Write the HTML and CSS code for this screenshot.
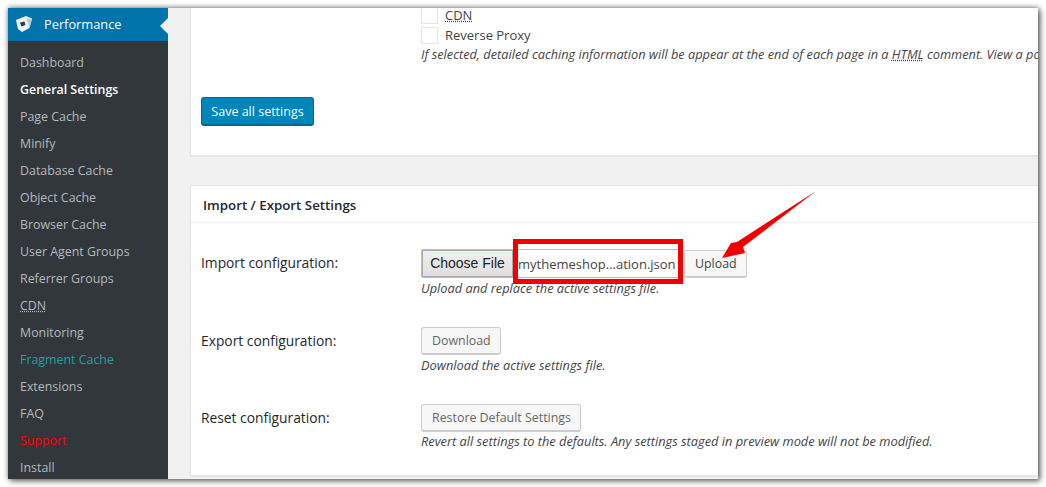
FILE: index.html
```html
<!DOCTYPE html>
<html lang="en">
<head>
    <meta charset="UTF-8">
    <title>Performance - General Settings</title>
    <link rel="stylesheet" href="styles.css">
</head>
<body>
    <div class="screen">
        <div class="sidebar">
            <div class="menu-head">
                <svg class="menu-icon" width="18" height="18" viewBox="0 0 18 18">
                    <path d="M1 5 L11 1 L17 3.5 L14.5 13 L7 17 L3 14 Z" fill="#f4f7f9"/>
                    <path d="M11 4 L17 3.5 L14.5 13 L13 8 Z" fill="#b9cdd8"/>
                    <path d="M5 7.5 L9.5 6.5 L10.5 10 L6.5 11.5 Z" fill="#32373c"/>
                </svg>
                <span>Performance</span>
            </div>
            <ul class="menu">
                <li>Dashboard</li>
                <li class="current">General Settings</li>
                <li>Page Cache</li>
                <li>Minify</li>
                <li>Database Cache</li>
                <li>Object Cache</li>
                <li>Browser Cache</li>
                <li>User Agent Groups</li>
                <li>Referrer Groups</li>
                <li><abbr>CDN</abbr></li>
                <li>Monitoring</li>
                <li class="teal">Fragment Cache</li>
                <li>Extensions</li>
                <li>FAQ</li>
                <li class="red">Support</li>
                <li>Install</li>
            </ul>
        </div>
        <div class="content">
            <div class="card card-top">
                <div class="check-row"><span class="check"></span><abbr>CDN</abbr></div>
                <div class="check-row"><span class="check"></span>Reverse Proxy</div>
                <p class="desc desc-long">If selected, detailed caching information will be appear at the end of each page in a <abbr>HTML</abbr> comment. View a possible list of the caching information here.</p>
                <button class="btn-primary">Save all settings</button>
            </div>
            <div class="card card-bottom">
                <h3 class="card-title">Import / Export Settings</h3>
                <div class="row row-import">
                    <div class="label">Import configuration:</div>
                    <div class="field">
                        <div class="file-line">
                            <div class="file-input">
                                <span class="choose">Choose File</span>
                                <span class="file-name">mythemeshop...ation.json</span>
                            </div>
                            <button class="btn">Upload</button>
                        </div>
                        <p class="desc">Upload and replace the active settings file.</p>
                    </div>
                </div>
                <div class="row row-export">
                    <div class="label">Export configuration:</div>
                    <div class="field">
                        <button class="btn btn-off">Download</button>
                        <p class="desc">Download the active settings file.</p>
                    </div>
                </div>
                <div class="row row-reset">
                    <div class="label">Reset configuration:</div>
                    <div class="field">
                        <button class="btn btn-off">Restore Default Settings</button>
                        <p class="desc desc-tight">Revert all settings to the defaults. Any settings staged in preview mode will not be modified.</p>
                    </div>
                </div>
            </div>
        </div>
        <!-- annotation drawn over the screenshot -->
        <div class="red-box"></div>
        <svg class="red-arrow" width="115" height="85" viewBox="0 0 115 85">
            <path d="M106 6 L27 57 L21 58 L12 73 L35 68 L33 62 Z" fill="#f00000"/>
        </svg>
    </div>
</body>
</html>
```
FILE: styles.css
```css
html, body {
	margin: 0;
	background-color: white;
}

body {
	padding: 8px;
	width: 1030px;
	height: 471px;
	overflow: hidden;
}

.screen {
	position: relative;
	display: flex;
	width: 1030px;
	height: 471px;
	overflow: hidden;
	background-color: #f1f1f1;
	font-family: "Open Sans", "Noto Sans", sans-serif;
	font-size: 13px;
	color: #444;
	box-shadow: 2px 2px 6px rgba(0, 0, 0, 0.6), 0 -1px 5px rgba(0, 0, 0, 0.35);
}

/* left menu */
.sidebar {
	width: 160px;
	flex-shrink: 0;
	background-color: #32373c;
}

.menu-head {
	display: flex;
	align-items: center;
	height: 32px;
	padding-bottom: 1px;
	background-color: #0073aa;
	color: white;
	font-size: 12.8px;
	position: relative;
}

.menu-head:after {
	content: "";
	position: absolute;
	right: 0;
	top: 10px;
	border: 8px solid transparent;
	border-right-color: #f1f1f1;
	border-left-width: 0;
}

.menu-icon {
	margin: 0 11px 0 7px;
}

.menu {
	list-style-type: none;
	margin: 0;
	padding: 8px 0 0 12px;
}

.menu li {
	height: 27px;
	line-height: 27px;
	color: #b4b9be;
	white-space: nowrap;
	font-size: 12.4px;
}

.menu .current {
	color: white;
	font-weight: 600;
}

.menu .teal {
	color: #1ca3a3;
}

.menu .red {
	color: #f00;
}

abbr {
	text-decoration: underline dotted;
}

/* main area */
.content {
	flex: 1;
	min-width: 0;
	padding-left: 22px;
}

.card {
	width: 900px;
	background-color: white;
	border: 1px solid #e5e5e5;
	box-shadow: 0 1px 1px rgba(0, 0, 0, 0.04);
}

.card-top {
	height: 151px;
	margin-top: -3px;
	border-top: 0;
	padding: 0 10px;
	box-sizing: border-box;
	margin-bottom: 29px;
}

.check-row {
	display: flex;
	align-items: center;
	height: 20px;
	margin-left: 220px;
}

.check {
	width: 15px;
	height: 15px;
	margin-right: 7px;
	border: 1px solid #e6e6e6;
}

.desc {
	margin: 1px 0 0 0;
	font-style: italic;
	font-size: 12.8px;
	line-height: 18px;
	white-space: nowrap;
}

.desc-long {
	margin: 0 0 0 220px;
	font-size: 12.75px;
}

.desc-tight {
	margin-top: 0;
}

.btn-primary {
	display: block;
	margin-top: 34px;
	width: 113px;
	height: 29px;
	padding: 0;
	background-color: #0085ba;
	border: 1px solid #006799;
	border-bottom-width: 2px;
	border-radius: 3px;
	color: white;
	font: inherit;
	font-size: 12.5px;
}

.card-bottom {
	height: 291px;
	box-sizing: border-box;
}

.card-title {
	margin: 0;
	height: 36px;
	line-height: 39px;
	padding-left: 12px;
	font-size: 13.3px;
	font-weight: 600;
	color: #23282d;
	border-bottom: 1px solid #eee;
}

.row {
	display: flex;
	padding-left: 10px;
}

.row-import {
	padding-top: 26px;
}

.row-export {
	padding-top: 30px;
}

.row-reset {
	padding-top: 30px;
}

.label {
	width: 220px;
	flex-shrink: 0;
	line-height: 28px;
	font-size: 13.8px;
	font-weight: 500;
	color: #23282d;
}

.field {
	min-width: 0;
}

.file-line {
	display: flex;
	align-items: flex-end;
	height: 29px;
}

.file-input {
	display: flex;
	align-items: center;
	align-self: flex-start;
	width: 256px;
	height: 27px;
	border: 1px solid #9ec2ef;
	border-radius: 2px;
	margin-right: 5px;
}

.choose {
	width: 91px;
	height: 27px;
	line-height: 25px;
	box-sizing: border-box;
	text-align: center;
	flex-shrink: 0;
	background: linear-gradient(#f0f0f0, #dedede);
	border: 1px solid #aaa;
	font-family: "Liberation Sans", sans-serif;
	font-size: 14px;
	color: #222;
}

.file-name {
	margin-left: 5px;
	white-space: nowrap;
	font-size: 13px;
}

.btn {
	height: 28px;
	padding: 0 9px 0 10px;
	background-color: #f7f7f7;
	border: 1px solid #ccc;
	border-bottom-width: 2px;
	border-radius: 3px;
	color: #444;
	font: inherit;
	font-size: 12.4px;
}

.btn-off {
	color: #666;
	display: block;
}

/* annotation */
.red-box {
	position: absolute;
	left: 505px;
	top: 231px;
	width: 170px;
	height: 45px;
	box-sizing: border-box;
	border: 5px solid #f00000;
}

.red-arrow {
	position: absolute;
	left: 702px;
	top: 177px;
}
```
